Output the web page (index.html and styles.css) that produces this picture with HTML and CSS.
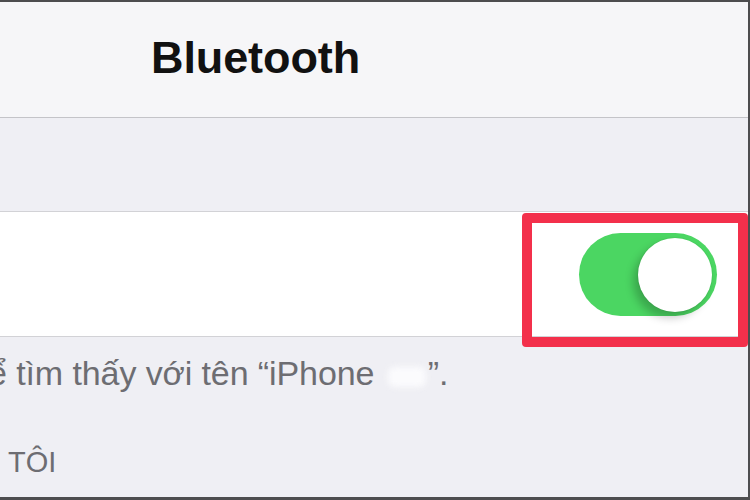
FILE: index.html
```html
<!DOCTYPE html>
<html lang="vi">
<head>
  <meta charset="UTF-8">
  <title>Bluetooth</title>
  <link rel="stylesheet" href="styles.css">
</head>
<body>
  <div class="screen">
    <div class="navbar">
      <h1 class="title">Bluetooth</h1>
    </div>

    <div class="group-gap"></div>

    <div class="cell">
      <div class="switch on">
        <span class="knob"></span>
      </div>
    </div>

    <p class="footnote">ể tìm thấy với tên “iPhone <span class="hidden-name"><span class="smudge"></span></span>”.</p>

    <p class="section-head">TÔI</p>

    <!-- highlight frame round the switch -->
    <div class="mark"></div>
  </div>
</body>
</html>
```

FILE: styles.css
```css
body { margin: 0; font-family: "Liberation Sans", Arial, sans-serif; background: #efeff4; }
.screen { position: relative; width: 750px; height: 500px; box-sizing: border-box; overflow: hidden; background: #efeff4; border-top: 2px solid #4d4d4f; border-right: 2px solid #4d4d4f; border-bottom: 3px solid #4d4d4f; }

.navbar { height: 116px; box-sizing: border-box; padding: 33px 0 0 151px; background: #f6f6f8; border-bottom: 1px solid #c4c4c8; }
.title { margin: 0; font-size: 45px; line-height: 1; font-weight: bold; color: #111; letter-spacing: -0.1px; }

.group-gap { height: 93px; }

.cell { height: 126px; box-sizing: border-box; display: flex; align-items: center; justify-content: flex-end; padding-right: 31px; background: #fff; border-top: 1px solid #d2d2d6; border-bottom: 1px solid #d2d2d6; }

.switch { position: relative; width: 138px; height: 83px; border-radius: 42px; background: #e5e5ea; }
.switch.on { background: #4bd662; }
.knob { position: absolute; top: 5px; right: 5px; width: 74px; height: 74px; border-radius: 50%; background: #fff; box-shadow: -5px 6px 9px rgba(0,0,0,0.22), 0 0 0 1px rgba(0,0,0,0.04); }

.footnote { margin: 19px 0 0 -12px; font-size: 34px; line-height: 1; color: #6d6d72; white-space: nowrap; letter-spacing: -0.1px; }
.hidden-name { display: inline-block; width: 44px; height: 22px; position: relative; vertical-align: -2px; }
.smudge { position: absolute; left: 4px; top: 2px; width: 38px; height: 20px; border-radius: 6px; background: #fbfbfd; filter: blur(3px); }

.section-head { margin: 58px 0 0 8px; font-size: 29px; line-height: 1; color: #6d6d72; }

.mark { position: absolute; left: 522px; top: 211px; width: 226px; height: 134px; box-sizing: border-box; border: 10px solid #f3304b; border-radius: 4px; }
```
